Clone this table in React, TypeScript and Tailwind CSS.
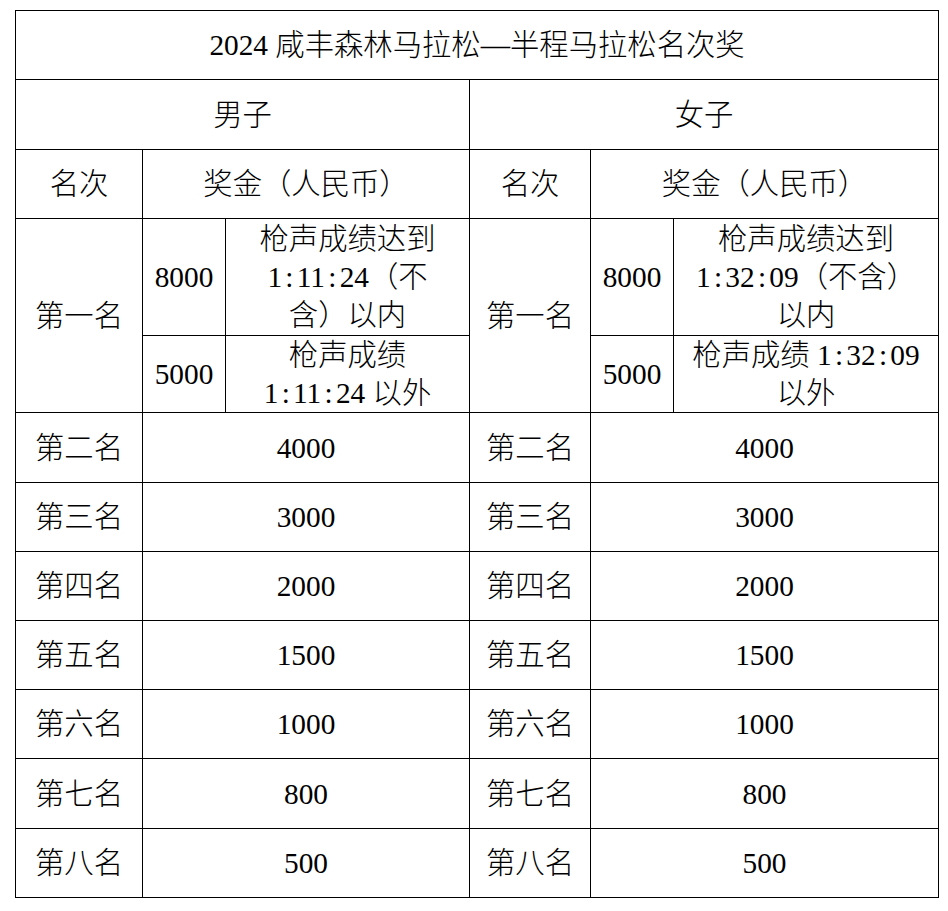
import React from "react";

const cell = "border border-black text-center align-middle p-0 whitespace-nowrap";

const rows: [string, string][] = [
  ["第二名", "4000"],
  ["第三名", "3000"],
  ["第四名", "2000"],
  ["第五名", "1500"],
  ["第六名", "1000"],
  ["第七名", "800"],
  ["第八名", "500"],
];
const rowH = ["h-[70px]", "h-[69px]", "h-[69px]", "h-[69px]", "h-[69px]", "h-[70px]", "h-[69px]"];

function Time({ t }: { t: string }) {
  const parts = t.split(":");
  return (
    <>
      {parts.map((p, i) => (
        <React.Fragment key={i}>
          {i > 0 && <span className="inline-block w-[14.67px] text-center">:</span>}
          {p}
        </React.Fragment>
      ))}
    </>
  );
}

export default function App() {
  return (
    <div className="w-[948px] h-[911px] bg-white pl-[15px] pt-[10px] text-black [font-family:'Liberation_Serif','Noto_Sans_CJK_SC',serif] font-light text-[29.33px] leading-[38px]">
      <table className="table-fixed border-collapse w-[923px]">
        <colgroup>
          <col className="w-[127px]" />
          <col className="w-[83px]" />
          <col className="w-[244px]" />
          <col className="w-[121px]" />
          <col className="w-[83px]" />
          <col className="w-[265px]" />
        </colgroup>
        <tbody>
          <tr className="h-[69px]">
            <td colSpan={6} className={cell}>2024 咸丰森林马拉松—半程马拉松名次奖</td>
          </tr>
          <tr className="h-[70px]">
            <td colSpan={3} className={cell}>男子</td>
            <td colSpan={3} className={cell}>女子</td>
          </tr>
          <tr className="h-[69px]">
            <td className={cell}>名次</td>
            <td colSpan={2} className={cell}>奖金（人民币）</td>
            <td className={cell}>名次</td>
            <td colSpan={2} className={cell}>奖金（人民币）</td>
          </tr>
          <tr className="h-[117px]">
            <td rowSpan={2} className={cell}>第一名</td>
            <td className={cell}>8000</td>
            <td className={cell}>
              <div>枪声成绩达到</div>
              <div><Time t="1:11:24" />（不</div>
              <div>含）以内</div>
            </td>
            <td rowSpan={2} className={cell}>第一名</td>
            <td className={cell}>8000</td>
            <td className={cell}>
              <div>枪声成绩达到</div>
              <div><Time t="1:32:09" />（不含）</div>
              <div>以内</div>
            </td>
          </tr>
          <tr className="h-[77px]">
            <td className={cell}>5000</td>
            <td className={cell}>
              <div>枪声成绩</div>
              <div><Time t="1:11:24" /> 以外</div>
            </td>
            <td className={cell}>5000</td>
            <td className={cell}>
              <div>枪声成绩 <Time t="1:32:09" /></div>
              <div>以外</div>
            </td>
          </tr>
          {rows.map(([name, amt], i) => (
            <tr key={name} className={rowH[i]}>
              <td className={cell}>{name}</td>
              <td colSpan={2} className={cell}>{amt}</td>
              <td className={cell}>{name}</td>
              <td colSpan={2} className={cell}>{amt}</td>
            </tr>
          ))}
        </tbody>
      </table>
    </div>
  );
}
